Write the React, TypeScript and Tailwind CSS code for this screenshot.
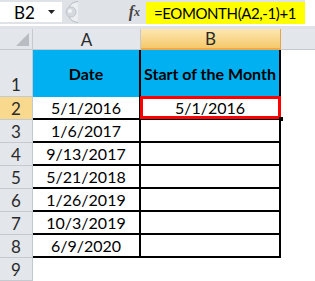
import React from 'react';

const dates = ['5/1/2016', '1/6/2017', '9/13/2017', '5/21/2018', '1/26/2019', '10/3/2019', '6/9/2020'];

const RowHead: React.FC<{ n: number; active?: boolean; tall?: boolean }> = ({ n, active, tall }) => (
  <div
    className={`flex justify-center border-r border-b border-[#c5cad1] text-[17px] text-[#2a2a2a] ${
      tall ? 'items-end pb-[3px]' : 'items-center'
    } ${active ? 'bg-[#f9d98d]' : 'bg-[#e3e6ea]'}`}
  >
    {n}
  </div>
);

const FormulaBar: React.FC = () => (
  <div className="flex h-[24px] bg-[#dfe2e7]">
    <div className="mt-[2px] flex h-[20px] w-[62px] items-center justify-between bg-white pl-[14px] pr-[7px] text-[17px] text-black">
      <span>B2</span>
      <svg width="7" height="4" viewBox="0 0 7 4" className="mb-[1px]">
        <path d="M0 0h7L3.5 4z" fill="#222" />
      </svg>
    </div>
    <svg width="16" height="24" viewBox="0 0 16 24" className="shrink-0">
      <path d="M16 1.5A10.5 10.5 0 0 0 16 22.5" fill="#eceef1" stroke="#b7bcc4" strokeWidth="1" />
      <circle cx="9" cy="12" r="5" fill="#d6d9de" stroke="#c2c6cc" />
      <circle cx="8" cy="11" r="2" fill="#f4f5f7" />
    </svg>
    <div className="flex-1" />
    <div className="mr-[6px] flex items-center pb-[1px] font-['Liberation_Serif',serif] text-[16px] font-bold italic text-[#444]">
      <span>f</span>
      <span className="text-[12px]">x</span>
    </div>
    <div className="mt-[2px] flex h-[22px] w-[159px] items-center overflow-hidden whitespace-nowrap bg-[#ffff00] pl-[8px] text-[15px] tracking-[-0.4px] text-black">
      =EOMONTH(A2,-1)+1
    </div>
    <div className="w-[10px] bg-white" />
  </div>
);

export default function App() {
  return (
    <div className="h-[281px] w-[315px] overflow-hidden bg-white font-['Lato',sans-serif] leading-none">
      <FormulaBar />
      <div className="h-[2px] bg-white" />
      <div className="h-[3px] bg-[#dfe2e7]" />
      <div className="grid grid-cols-[33px_108px_140px_34px] grid-rows-[21px_47px_repeat(8,23px)]">
        {/* column headers */}
        <div className="relative border-r border-b border-[#c5cad1] bg-[#e3e6ea]">
          <svg width="13" height="13" viewBox="0 0 13 13" className="absolute right-[3px] bottom-[3px]">
            <path d="M13 0V13H0z" fill="#b9bdc3" />
          </svg>
        </div>
        <div className="flex items-center justify-center border-r border-b border-[#c5cad1] bg-[#e3e6ea] text-[17px] text-[#2a2a2a]">
          A
        </div>
        <div className="flex items-center justify-center border-r border-b-2 border-r-[#e3a646] border-b-[#f0a84a] bg-gradient-to-b from-[#fde7b0] to-[#f6c96a] text-[17px] text-[#2a2a2a]">
          B
        </div>
        <div className="border-b border-[#c5cad1] bg-[#e3e6ea]" />

        {/* row 1 */}
        <RowHead n={1} tall />
        <div className="flex items-center justify-center border-r-2 border-black bg-[#00b0f0] text-[16px] font-bold text-black">
          Date
        </div>
        <div className="flex items-center justify-center whitespace-nowrap border-r-2 border-black bg-[#00b0f0] text-[16px] font-bold text-black">
          Start of the Month
        </div>
        <div />

        {dates.map((d, i) => (
          <React.Fragment key={d}>
            <RowHead n={i + 2} active={i === 0} />
            <div className="flex items-center justify-center border-r-2 border-b-2 border-black text-[16px] text-black">
              {d}
            </div>
            <div className="relative flex items-center justify-center border-r-2 border-b-2 border-black text-[16px] text-black">
              {i === 0 && (
                <>
                  <div className="absolute top-[-1px] left-[-1px] right-[-2px] bottom-[-1px] border-[3px] border-[#ff0000]" />
                  <div className="absolute right-[-4px] bottom-[-3px] h-[4px] w-[4px] bg-black" />
                  5/1/2016
                </>
              )}
            </div>
            <div />
          </React.Fragment>
        ))}

        <RowHead n={9} />
        <div />
        <div />
        <div />
      </div>
    </div>
  );
}
